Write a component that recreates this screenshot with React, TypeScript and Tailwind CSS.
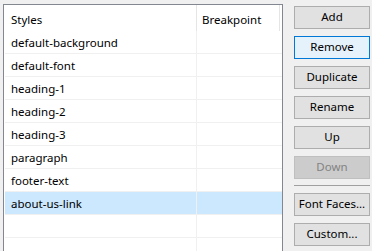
const styles = [
  'default-background',
  'default-font',
  'heading-1',
  'heading-2',
  'heading-3',
  'paragraph',
  'footer-text',
  'about-us-link',
  '',
  '',
];

const selected = 'about-us-link';

function Btn({ label, variant = 'normal' }: { label: string; variant?: 'normal' | 'focus' | 'disabled' }) {
  const look =
    variant === 'focus'
      ? 'border-[#0078d7] bg-[#e5f1fb] text-black'
      : variant === 'disabled'
        ? 'border-[#bfbfbf] bg-[#cccccc] text-[#838383]'
        : 'border-[#adadad] bg-[#e1e1e1] text-black';
  return (
    <button className={`flex h-[23px] w-[76px] items-center justify-center border pb-px text-[11.5px] leading-none ${look}`}>
      {label}
    </button>
  );
}

export default function App() {
  return (
    <div
      className="flex h-[251px] w-[372px] overflow-hidden bg-[#f0f0f0] text-[11.5px] text-black"
      style={{ fontFamily: '"Noto Sans", "Liberation Sans", sans-serif' }}
    >
      <div className="ml-[3px] mt-[4px] flex h-[260px] w-[280px] flex-col border border-[#828790] bg-white">
        <div className="flex h-[26px] shrink-0 items-center">
          <div className="flex h-full w-[193px] items-center border-r border-[#e5e5e5] pl-[7px] pt-[3px]">Styles</div>
          <div className="flex h-full w-[83px] items-center border-r border-[#e5e5e5] pl-[5px] pt-[3px]">Breakpoint</div>
        </div>
        {styles.map((name, i) => (
          <div
            key={i}
            className={`ml-px flex h-[23px] shrink-0 border-b border-[#f0f0f0] ${name === selected ? 'bg-[#cce8ff]' : ''}`}
          >
            <div className="flex h-full w-[192px] items-center border-r border-[#f0f0f0] pl-[6px] pt-px">{name}</div>
            <div className="h-full flex-1" />
          </div>
        ))}
      </div>

      <div className="ml-[11px] mt-[6px] flex flex-col gap-[7px]">
        <Btn label="Add" />
        <Btn label="Remove" variant="focus" />
        <Btn label="Duplicate" />
        <Btn label="Rename" />
        <Btn label="Up" />
        <Btn label="Down" variant="disabled" />
        <div className="-mt-px h-px w-[76px] bg-[#a0a0a0]" />
        <Btn label="Font Faces..." />
        <Btn label="Custom..." />
      </div>
    </div>
  );
}
